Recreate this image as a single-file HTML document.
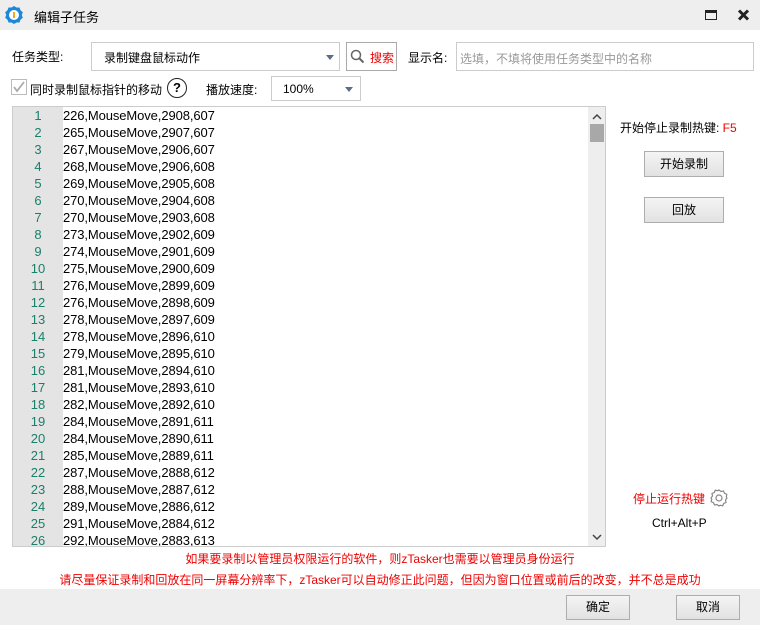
<!DOCTYPE html>
<html><head><meta charset="utf-8"><style>
*{margin:0;padding:0;box-sizing:border-box}
body{width:760px;height:625px;background:#fff;font-family:"Liberation Sans","Noto Sans CJK SC",sans-serif;font-size:12px;color:#000;position:relative;overflow:hidden}
.a{position:absolute}
.btn{position:absolute;border:1px solid #adadad;background:linear-gradient(#f4f4f4,#e2e2e2);text-align:center;font-size:12px}
</style></head><body>
<div class="a" style="left:0;top:0;width:760px;height:30px;background:#eeeeee"></div>
<svg class="a" style="left:4px;top:5px" width="20" height="20" viewBox="0 0 20 20"><path d="M10 1l2.5 1.5 3 0 1 2.8 2.3 2-1 2.7 1 2.7-2.3 2-1 2.8-3 0L10 19l-2.5-1.5-3 0-1-2.8-2.3-2 1-2.7-1-2.7 2.3-2 1-2.8 3 0z" fill="#1e88d8"/><circle cx="10" cy="10" r="5" fill="#fff"/><rect x="9" y="7" width="2" height="6" fill="#f5a623"/></svg>
<div class="a" style="left:34px;top:7px;font-size:13px">编辑子任务</div>
<div class="a" style="left:705px;top:10px;width:12px;height:10px;border:1px solid #222;border-top:3px solid #222"></div>
<svg class="a" style="left:737px;top:9px" width="13" height="12"><path d="M2 1.5l9 9M11 1.5l-9 9" stroke="#222" stroke-width="3"/></svg>

<div class="a" style="left:12px;top:48px">任务类型:</div>
<div class="a" style="left:91px;top:42px;width:249px;height:29px;border:1px solid #ccc;padding:6px 0 0 12px">录制键盘鼠标动作</div>
<div class="a" style="left:326px;top:55px;border-left:4px solid transparent;border-right:4px solid transparent;border-top:5px solid #5a6e8a"></div>
<div class="a" style="left:346px;top:42px;width:51px;height:29px;border:1px solid #aaa;padding:6px 0 0 23px;color:#e00">搜索</div>
<svg class="a" style="left:350px;top:49px" width="15" height="15"><circle cx="6" cy="6" r="4.5" fill="none" stroke="#666" stroke-width="1.5"/><path d="M9.5 9.5l4 4" stroke="#666" stroke-width="2"/></svg>
<div class="a" style="left:408px;top:49px">显示名:</div>
<div class="a" style="left:456px;top:42px;width:298px;height:29px;border:1px solid #ccc;padding:7px 0 0 3px;color:#999">选填，不填将使用任务类型中的名称</div>

<div class="a" style="left:11px;top:79px;width:16px;height:16px;border:1px solid #bbb"></div>
<svg class="a" style="left:12px;top:80px" width="14" height="14"><path d="M2 7l3 4 7-9" fill="none" stroke="#aaa" stroke-width="1.8"/></svg>
<div class="a" style="left:30px;top:81px">同时录制鼠标指针的移动</div>
<div class="a" style="left:167px;top:78px;width:20px;height:20px;border:1.5px solid #222;border-radius:50%;text-align:center;font-weight:bold;font-size:13px;line-height:17px">?</div>
<div class="a" style="left:206px;top:81px">播放速度:</div>
<div class="a" style="left:271px;top:76px;width:90px;height:25px;border:1px solid #ccc;padding:5px 0 0 11px">100%</div>
<div class="a" style="left:345px;top:87px;border-left:4px solid transparent;border-right:4px solid transparent;border-top:5px solid #5a6e8a"></div>

<div class="a" style="left:12px;top:106px;width:594px;height:441px;border:1px solid #ccc;overflow:hidden">
<div class="a" style="left:0;top:0;width:50px;height:441px;background:#e4e4e4"></div>
<div class="a" style="left:575px;top:0;width:18px;height:441px;background:#eeeeee"></div>
<div class="a" style="left:577px;top:17px;width:14px;height:18px;background:#a8a8a8"></div>
<svg class="a" style="left:579px;top:6px" width="10" height="8"><path d="M1 6l4-4 4 4" fill="none" stroke="#444" stroke-width="1.5"/></svg>
<svg class="a" style="left:579px;top:426px" width="10" height="8"><path d="M1 2l4 4 4-4" fill="none" stroke="#444" stroke-width="1.5"/></svg>
<div id="L" class="a" style="left:0;top:0;font-size:13px;line-height:17px"></div>
</div>

<div class="a" style="left:620px;top:119px">开始停止录制热键:<span style="color:#e00">&nbsp;F5</span></div>
<div class="btn" style="left:644px;top:151px;width:80px;height:26px;line-height:24px">开始录制</div>
<div class="btn" style="left:644px;top:197px;width:80px;height:26px;line-height:24px">回放</div>
<div class="a" style="left:633px;top:490px;color:#e00">停止运行热键</div>
<svg class="a" style="left:709px;top:488px" width="20" height="20" viewBox="0 0 20 20"><path d="M10 2l2 1.5 2.5-.5 1 2.3 2.3 1-.5 2.5L18 10l-1.5 2 .5 2.5-2.3 1-1 2.3-2.5-.5L10 18l-2-1.5-2.5.5-1-2.3-2.3-1 .5-2.5L2 10l1.5-2L3 5.5l2.3-1 1-2.3 2.5.5z" fill="none" stroke="#888" stroke-width="1.2"/><circle cx="10" cy="10" r="3" fill="none" stroke="#888" stroke-width="1.2"/></svg>
<div class="a" style="left:652px;top:516px">Ctrl+Alt+P</div>

<div class="a" style="left:0;top:550px;width:760px;text-align:center;color:#e00">如果要录制以管理员权限运行的软件，则zTasker也需要以管理员身份运行</div>
<div class="a" style="left:0;top:571px;width:760px;text-align:center;color:#e00">请尽量保证录制和回放在同一屏幕分辨率下，zTasker可以自动修正此问题，但因为窗口位置或前后的改变，并不总是成功</div>

<div class="a" style="left:0;top:589px;width:760px;height:36px;background:#eeeeee"></div>
<div class="btn" style="left:566px;top:595px;width:64px;height:25px;line-height:23px">确定</div>
<div class="btn" style="left:676px;top:595px;width:64px;height:25px;line-height:23px">取消</div>
<script>
var d=[[226,2908,607],[265,2907,607],[267,2906,607],[268,2906,608],[269,2905,608],[270,2904,608],[270,2903,608],[273,2902,609],[274,2901,609],[275,2900,609],[276,2899,609],[276,2898,609],[278,2897,609],[278,2896,610],[279,2895,610],[281,2894,610],[281,2893,610],[282,2892,610],[284,2891,611],[284,2890,611],[285,2889,611],[287,2888,612],[288,2887,612],[289,2886,612],[291,2884,612],[292,2883,613]];
var h='';d.forEach(function(r,i){h+='<div style="position:relative;height:17px"><span style="position:absolute;left:0;width:50px;text-align:center;color:#1a7f6a">'+(i+1)+'</span><span style="position:absolute;left:50px;letter-spacing:-0.1px">'+r[0]+',MouseMove,'+r[1]+','+r[2]+'</span></div>';});
document.getElementById('L').innerHTML=h;
</script>
</body></html>
